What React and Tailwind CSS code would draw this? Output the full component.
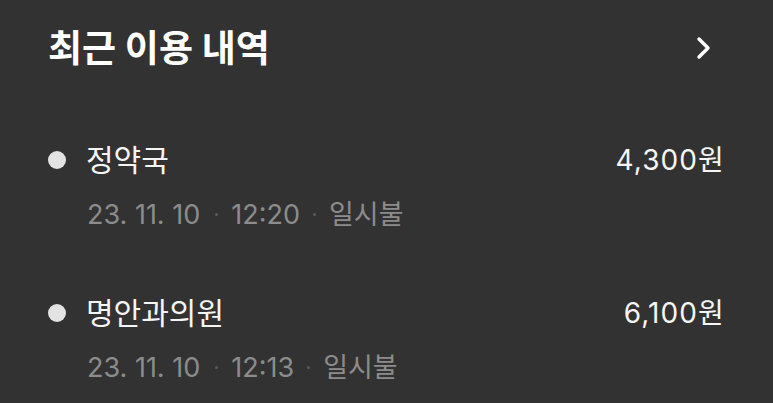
export default function App() {
  const items = [
    { name: "정약국", date: "23. 11. 10", time: "12:20", type: "일시불", amount: "4,300원" },
    { name: "명안과의원", date: "23. 11. 10", time: "12:13", type: "일시불", amount: "6,100원" },
  ];
  return (
    <div
      className="w-[773px] h-[403px] bg-[#323232] overflow-hidden pl-[48px] pr-[50px]"
      style={{ fontFamily: 'Inter, "Noto Sans CJK KR", "Noto Sans", sans-serif' }}
    >
      <div className="flex items-center justify-between h-[96px]">
        <div className="text-[37px] font-bold text-white leading-none">최근 이용 내역</div>
        <svg width="16" height="24" viewBox="0 0 16 24" className="mr-[11px]">
          <path d="M3 3 L12 12 L3 21" fill="none" stroke="white" strokeWidth="3.4" strokeLinecap="round" strokeLinejoin="round" />
        </svg>
      </div>
      <div className="flex flex-col mt-[42px] gap-[62px]">
        {items.map((it, i) => (
          <div key={i} className="flex flex-col">
            <div className="flex items-center justify-between h-[44px]">
              <div className="flex items-center">
                <div className="w-[18px] h-[18px] rounded-full bg-[#e3e3e3]" />
                <div className="ml-[20px] text-[30px] text-[#f5f5f5] leading-none">{it.name}</div>
              </div>
              <div className="text-[28px] tracking-[0.04em] text-[#f5f5f5] leading-none mr-[-2px]">{it.amount}</div>
            </div>
            <div className="flex items-center ml-[39px] mt-[17px] h-[30px] text-[27px] text-[#8c8c8c] leading-none">
              <span>{it.date}</span>
              <span className="ml-[15px] mr-[13px] w-[3px] h-[3px] rounded-full bg-[#5a5a5a]" />
              <span>{it.time}</span>
              <span className="ml-[13px] mr-[13px] w-[3px] h-[3px] rounded-full bg-[#5a5a5a]" />
              <span>{it.type}</span>
            </div>
          </div>
        ))}
      </div>
    </div>
  );
}
